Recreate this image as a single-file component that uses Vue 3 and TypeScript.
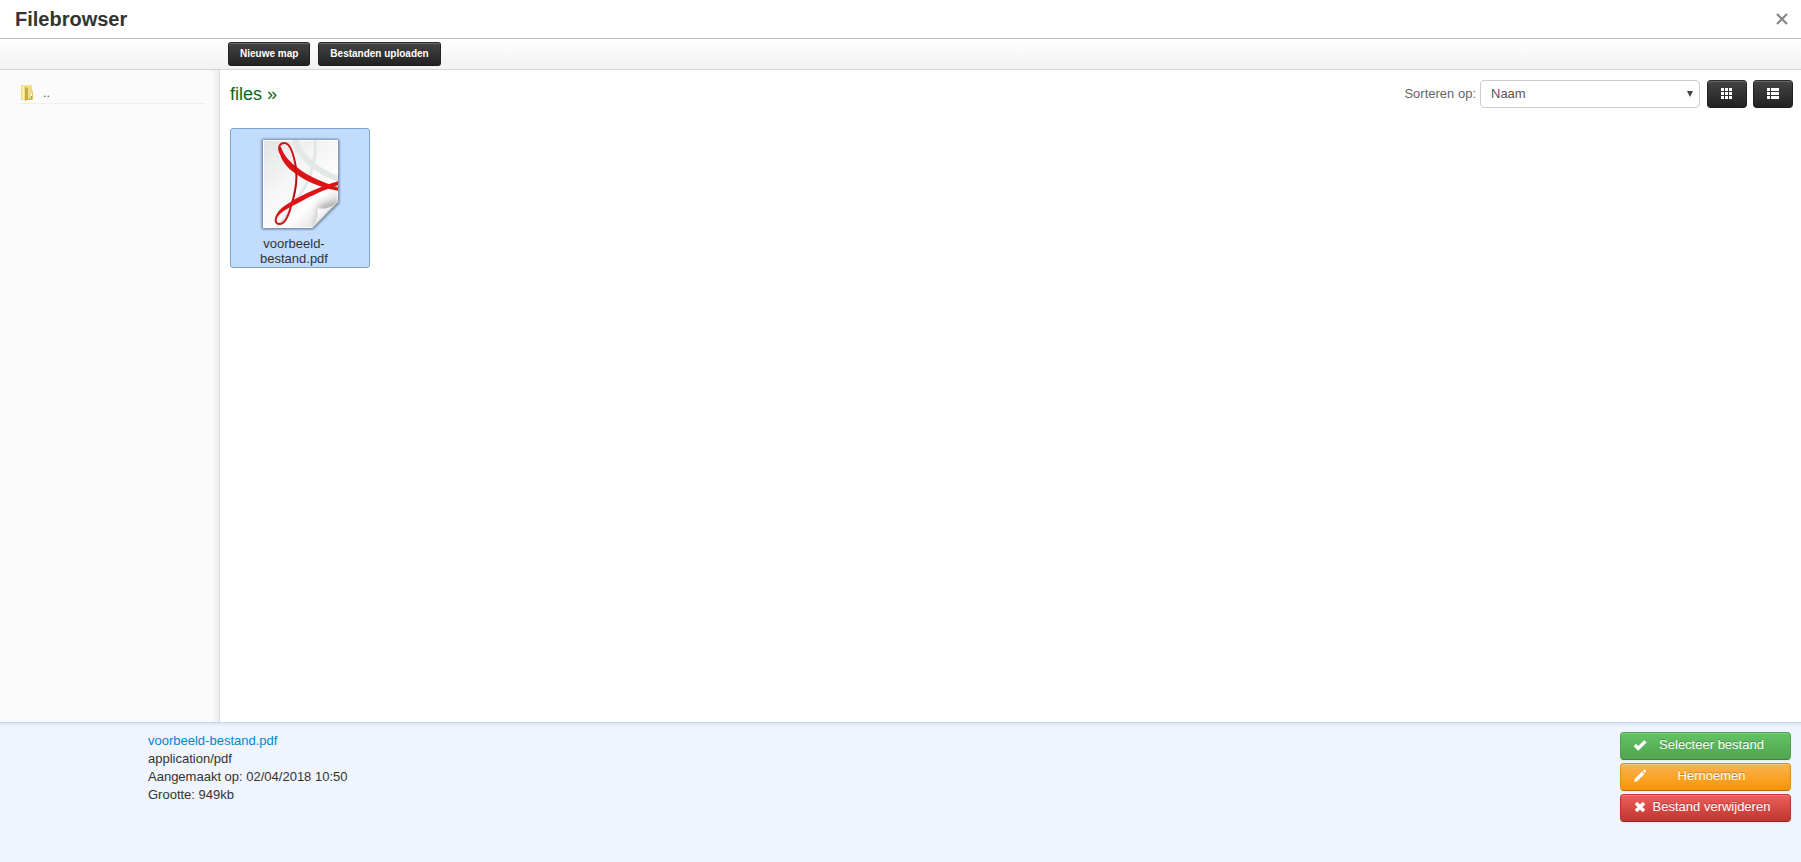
<script setup lang="ts">
import { ref } from 'vue'

interface FileEntry {
  name: string
  label: string[]
  type: string
  created: string
  size: string
}

const file: FileEntry = {
  name: 'voorbeeld-bestand.pdf',
  label: ['voorbeeld-', 'bestand.pdf'],
  type: 'application/pdf',
  created: '02/04/2018 10:50',
  size: '949kb',
}
const sort = ref('Naam')
const sortOptions = ['Naam', 'Grootte', 'Datum']
const gridCells = [0, 4, 8]
</script>

<template>
  <div class="browser">
    <header class="titlebar">
      <h1>Filebrowser</h1>
      <button class="close" type="button" aria-label="Sluiten">
        <svg width="12" height="12" viewBox="0 0 12 12"><path d="M1 1L11 11M11 1L1 11" fill="none" stroke="#858585" stroke-width="2.2" /></svg>
      </button>
    </header>

    <div class="toolbar">
      <button class="dark small" type="button">Nieuwe map</button>
      <button class="dark small" type="button">Bestanden uploaden</button>
    </div>

    <div class="body">
      <nav class="sidebar">
        <a class="folder" href="#">
          <svg width="14" height="16" viewBox="0 0 14 16">
            <defs>
              <linearGradient id="folderBack" x2="0" y2="1"><stop stop-color="#f3e48f" /><stop offset="1" stop-color="#d9bb4e" /></linearGradient>
              <linearGradient id="folderFront" x2="1"><stop stop-color="#ecd874" /><stop offset=".5" stop-color="#fbf3b4" /><stop offset="1" stop-color="#dcc059" /></linearGradient>
            </defs>
            <path d="M1 0H12V6H13V14L12 15H1Z" fill="url(#folderBack)" />
            <path d="M6 1H11V13H6Z" fill="#eedd86" />
            <path d="M1 0L6 2V16L1 14.5Z" fill="url(#folderFront)" />
            <path d="M5 2L8 3V14L6 15.5H5Z" fill="#bfa03b" opacity=".8" />
            <path d="M11 8H12V11H11Z" fill="#fff" /><path d="M11 11H12V13H11Z" fill="#48a9cf" />
          </svg>
          <span>..</span>
        </a>
      </nav>

      <main class="content">
        <div class="controls">
          <a class="crumb" href="#">files »</a>
          <div class="sorting">
            <label for="sort">Sorteren op:</label>
            <span class="select">
              <select id="sort" v-model="sort">
                <option v-for="o in sortOptions" :key="o">{{ o }}</option>
              </select>
              <svg class="arrow" width="6" height="6" viewBox="0 0 6 6"><path d="M0 0H6L3 6Z" fill="#444" /></svg>
            </span>
            <button class="dark view" type="button" aria-label="Rasterweergave">
              <svg width="12" height="12" viewBox="0 0 12 12" fill="#fff" shape-rendering="crispEdges">
                <template v-for="y in gridCells" :key="y">
                  <rect v-for="x in gridCells" :key="x" :x="x" :y="y" width="3" height="3" />
                </template>
              </svg>
            </button>
            <button class="dark view" type="button" aria-label="Lijstweergave">
              <svg width="12" height="12" viewBox="0 0 12 12" fill="#fff" shape-rendering="crispEdges">
                <template v-for="y in gridCells" :key="y">
                  <rect x="0" :y="y" width="3" height="3" /><rect x="4" :y="y" width="8" height="3" />
                </template>
              </svg>
            </button>
          </div>
        </div>

        <button class="card" type="button">
          <svg width="82" height="94" viewBox="0 0 82 94">
            <defs>
              <linearGradient id="paper" x2=".8" y2="1"><stop stop-color="#e2e4e4" /><stop offset=".45" stop-color="#f6f6f6" /><stop offset=".75" stop-color="#fdfdfd" /><stop offset="1" stop-color="#ddd" /></linearGradient>
              <linearGradient id="curl" x1=".1" y1=".1" x2=".65" y2=".65"><stop stop-color="#c4c4c4" /><stop offset=".3" stop-color="#fff" /><stop offset=".65" stop-color="#eee" /><stop offset="1" stop-color="#aaa" /></linearGradient>
              <filter id="shade" x="-10%" y="-10%" width="120%" height="120%"><feGaussianBlur stdDeviation="1.4" /></filter>
              <filter id="fold" x="-30%" y="-30%" width="160%" height="160%"><feGaussianBlur stdDeviation="3" /></filter>
              <clipPath id="sheet"><path d="M4 3H79V65L53 91H4Z" /></clipPath>
            </defs>
            <path d="M3 2.5H80V66L54 92H3Z" fill="#3c4f6c" opacity=".8" filter="url(#shade)" />
            <path d="M4.500 3.500H78.500V64.500L53 90.500H4.500Z" fill="url(#paper)" stroke="#fff" />
            <g clip-path="url(#sheet)">
              <path d="M36 3C40 19 58 35 80 42" fill="none" stroke="#e3e7e7" stroke-width="6" />
              <path d="M56 3C58 24 50 50 34 66C30 74 26 84 18 89" fill="none" stroke="#e3e7e7" stroke-width="3" />
              <path d="M56 92L60 68L80 62V92Z" fill="#777" opacity=".5" filter="url(#fold)" />
              <path d="M22 17C18 10 21 6 25.500 6C32 6 35 19 37 31C39 43 35 61 31.500 71C29 80 25 87 20.500 87C14 87 16 78 24.500 71" fill="none" stroke="#d01216" stroke-width="2" />
              <path d="M20 10C20 22 28 31 37 37C47 44 59 50 80 54V50C64 46 49 39 39 31C31 25 25 19 22 10Z" fill="#dc1418" />
              <path d="M17 82C21 75 31 70 41 65C54 58 65 53 80 48V44C62 49 45 57 33 64C25 69 17 74 17 82Z" fill="#dc1418" />
              <path d="M36 28C38 36 38 52 34 63" fill="none" stroke="#b30e12" stroke-width="1" />
              <path d="M75 49.500L79 48.500V50.500Z" fill="#f6b1b1" />
            </g>
            <path d="M53 91C57 86 59 78 58.500 71C64 73 73 71 79 64.500Z" fill="url(#curl)" stroke="#ddd" stroke-width=".6" />
          </svg>
          <span class="filename"><span v-for="part in file.label" :key="part">{{ part }}</span></span>
        </button>
      </main>
    </div>

    <footer class="details">
      <div class="info">
        <a href="#">{{ file.name }}</a>
        <span>{{ file.type }}</span>
        <span>Aangemaakt op: {{ file.created }}</span>
        <span>Grootte: {{ file.size }}</span>
      </div>
      <div class="actions">
        <button class="action green" type="button">
          <svg width="14" height="14" viewBox="0 0 14 14"><path d="M1.800 7L5.200 10.400L12.400 3.200" fill="none" stroke="#fff" stroke-width="3.400" /></svg>
          <span>Selecteer bestand</span>
        </button>
        <button class="action orange" type="button">
          <svg width="14" height="14" viewBox="0 0 14 14" fill="#fff"><path d="M1 13L2 9.500L9 2.500L11.500 5L4.500 12Z" /><path d="M9.800 1.800L11 .8H12L13 1.900V3L12.100 4.100Z" /></svg>
          <span>Hernoemen</span>
        </button>
        <button class="action red" type="button">
          <svg width="14" height="14" viewBox="0 0 14 14"><path d="M3 3L11 11M11 3L3 11" fill="none" stroke="#fff" stroke-width="3.600" /></svg>
          <span>Bestand verwijderen</span>
        </button>
      </div>
    </footer>
  </div>
</template>

<style>
body {
  margin: 0;
}
</style>

<style scoped>
.browser {
  display: flex;
  flex-direction: column;
  min-height: 100vh;
  background: #fff;
  color: #333;
  font: 13px/18px "Liberation Sans", Arial, sans-serif;
}
.browser *, .browser {
  box-sizing: border-box;
}
button, select {
  font: inherit;
  margin: 0;
  cursor: pointer;
}
a {
  text-decoration: none;
}
svg {
  display: block;
}
.titlebar {
  display: flex;
  align-items: center;
  justify-content: space-between;
  height: 39px;
  padding: 0 13px 0 15px;
  border-bottom: 1px solid #bbb;
}
h1 {
  margin: 0;
  font-size: 20px;
  line-height: 38px;
}
.close {
  padding: 0;
  border: 0;
  background: none;
}
.toolbar {
  display: flex;
  align-items: center;
  gap: 8px;
  height: 31px;
  padding-left: 228px;
  border-bottom: 1px solid #d4d4d4;
  background: linear-gradient(#fff, #f2f2f2);
}
.dark {
  border: 1px solid #222;
  border-color: #2b2b2b #222 #1c1c1c;
  border-radius: 4px;
  background: linear-gradient(#444, #222);
  box-shadow: inset 0 1px 0 rgba(255, 255, 255, .2);
  color: #fff;
}
.small {
  height: 24px;
  padding: 0 11px;
  border-radius: 3px;
  font-size: 10px;
  font-weight: bold;
  line-height: 20px;
}
.body {
  display: flex;
  flex: 1;
}
.sidebar {
  width: 220px;
  padding: 13px 14px 0 20px;
  border-right: 1px solid #d3dfed;
  background: #fbfbfb;
  box-shadow: inset -6px 0 6px -3px rgba(0, 0, 0, .08);
}
.folder {
  display: flex;
  align-items: center;
  gap: 9px;
  height: 21px;
  border-bottom: 1px solid #eee;
  color: #666;
}
.content {
  flex: 1;
  padding: 10px 8px 10px 10px;
}
.controls {
  display: flex;
  align-items: center;
  justify-content: space-between;
  height: 28px;
}
.crumb {
  color: #006a1c;
  font-size: 18px;
}
.sorting {
  display: flex;
  align-items: center;
  color: #666;
}
.select {
  position: relative;
  margin: 0 7px 0 4px;
}
select {
  display: block;
  appearance: none;
  width: 220px;
  height: 28px;
  padding: 0 20px 0 10px;
  border: 1px solid #ccc;
  border-radius: 4px;
  background: #fff;
  color: #555;
}
.arrow {
  position: absolute;
  top: 11px;
  right: 7px;
  pointer-events: none;
}
.view {
  display: flex;
  align-items: center;
  justify-content: center;
  width: 40px;
  height: 28px;
  padding: 0;
}
.view + .view {
  margin-left: 6px;
}
.card {
  display: flex;
  flex-direction: column;
  align-items: center;
  width: 140px;
  height: 140px;
  margin-top: 20px;
  padding: 8px 0 0;
  border: 1px solid #7da2ce;
  border-radius: 3px;
  background: #c1dcfc;
  color: #333;
}
.filename {
  display: flex;
  flex-direction: column;
  align-items: center;
  margin-right: 12px;
  padding-top: 5px;
  line-height: 15px;
}
.details {
  display: flex;
  align-items: flex-start;
  justify-content: space-between;
  min-height: 140px;
  padding: 9px 10px 9px 148px;
  border-top: 1px solid #c4d3e8;
  background: linear-gradient(#dce5f1, #f0f4fc 4px);
}
.info {
  display: flex;
  flex-direction: column;
}
.info a {
  color: #08c;
}
.actions {
  display: flex;
  flex-direction: column;
  gap: 3px;
  width: 171px;
}
.action {
  display: flex;
  align-items: center;
  height: 28px;
  padding: 0 19px 2px 12px;
  border: 1px solid;
  border-radius: 4px;
  box-shadow: inset 0 1px 0 rgba(255, 255, 255, .2), 0 1px 2px rgba(0, 0, 0, .05);
  color: #fff;
  text-shadow: 0 -1px 0 rgba(0, 0, 0, .25);
  white-space: nowrap;
}
.action span {
  flex: 1;
  margin-left: 5px;
  text-align: center;
}
.green {
  border-color: #51a351 #51a351 #3d843d;
  background: linear-gradient(#62c462, #51a351);
}
.orange {
  border-color: #e08f1c #e08f1c #b56c05;
  background: linear-gradient(#fbb450, #f89406);
}
.red {
  border-color: #bd362f #bd362f #942a25;
  background: linear-gradient(#ee5f5b, #bd362f);
}
</style>
